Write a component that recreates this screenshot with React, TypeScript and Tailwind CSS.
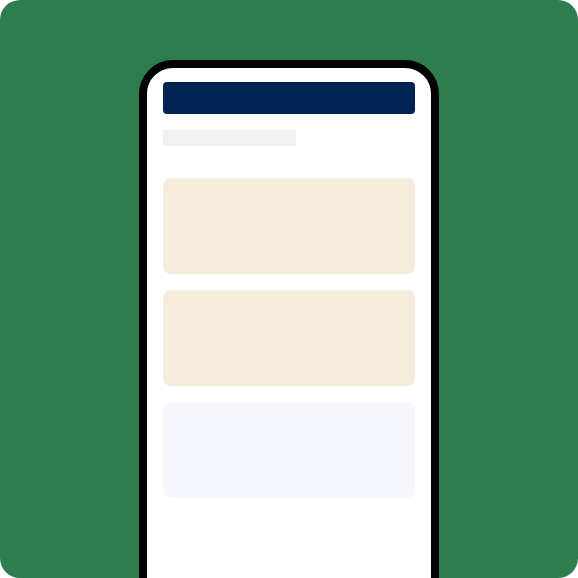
export default function App() {
	return (
		<div className="w-[578px] h-[578px] overflow-hidden bg-white">
			<div className="flex justify-center w-full h-full pt-[60px] bg-[#2e7d4f] rounded-[20px] overflow-hidden">
				<div className="flex flex-col w-[300px] h-[560px] shrink-0 border-8 border-black rounded-[34px] bg-white px-4 pt-[14px]">
					<div className="w-full h-8 rounded bg-[#002352]"></div>
					<div className="w-[133px] h-4 mt-4 bg-[#f3f2f1]"></div>
					<div className="flex flex-col gap-4 mt-8">
						<div className="w-full h-24 rounded-lg bg-[#f5eddb]"></div>
						<div className="w-full h-24 rounded-lg bg-[#f5eddb]"></div>
						<div className="w-full h-24 rounded-lg bg-[#f7f8fd]"></div>
					</div>
				</div>
			</div>
		</div>
	);
}
